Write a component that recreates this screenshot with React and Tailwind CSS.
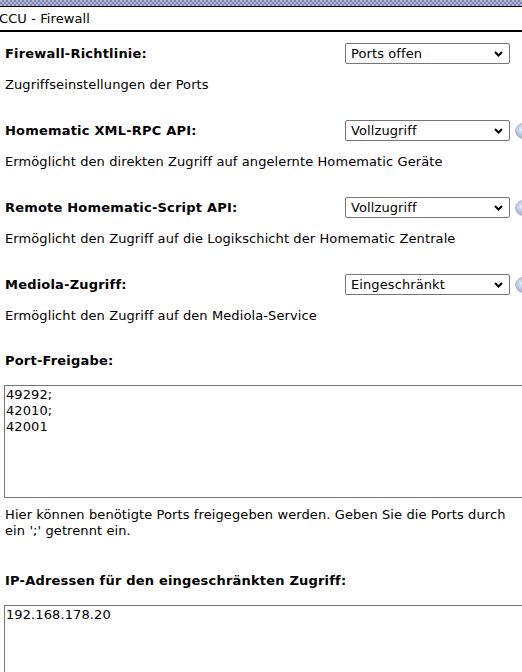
const SECTIONS = [
  {
    label: "Firewall-Richtlinie:",
    value: "Ports offen",
    desc: "Zugriffseinstellungen der Ports",
    help: false,
  },
  {
    label: "Homematic XML-RPC API:",
    value: "Vollzugriff",
    desc: "Ermöglicht den direkten Zugriff auf angelernte Homematic Geräte",
    help: true,
  },
  {
    label: "Remote Homematic-Script API:",
    value: "Vollzugriff",
    desc: "Ermöglicht den Zugriff auf die Logikschicht der Homematic Zentrale",
    help: true,
  },
  {
    label: "Mediola-Zugriff:",
    value: "Eingeschränkt",
    desc: "Ermöglicht den Zugriff auf den Mediola-Service",
    help: true,
  },
];

function Select({ value }) {
  return (
    <div className="relative w-[165px] h-[21px] shrink-0">
      <select
        defaultValue={value}
        className="appearance-none w-full h-full border border-[#767676] rounded-[2px] bg-white pl-[5px] text-[13px] leading-[19px] text-black"
      >
        <option>{value}</option>
      </select>
      <svg
        className="absolute right-[7px] top-[8px] pointer-events-none"
        width="9"
        height="6"
        viewBox="0 0 9 6"
      >
        <path d="M1 1l3.5 3.5L8 1" fill="none" stroke="#000" strokeWidth="2" />
      </svg>
    </div>
  );
}

function HelpIcon() {
  return (
    <span className="ml-[5px] shrink-0 w-[16px] h-[16px] rounded-full border border-[#b8bcc4] bg-[radial-gradient(circle_at_40%_40%,#e8eefa,#7d93c6)]" />
  );
}

export default function App() {
  return (
    <div className="w-[522px] min-h-[672px] overflow-hidden bg-white text-black text-[13px] leading-[16px] tracking-[0.1px] font-['DejaVu_Sans',Verdana,sans-serif]">
      {/* Title bar */}
      <div className="h-[6px] bg-[repeating-conic-gradient(#7b84b2_0_25%,#b3b8d6_0_50%)] bg-[length:4px_4px]" />
      <div className="border-t border-black border-b-2 h-[26px] flex items-center -ml-[1px]">
        CCU - Firewall
      </div>

      <div className="pl-[5px] pt-[11px]">
        {SECTIONS.map((s, i) => (
          <div key={s.label} className={i === 0 ? "" : "mt-[27px]"}>
            <div className="flex items-center h-[21px]">
              <div className="w-[340px] shrink-0 font-bold tracking-[0.2px]">{s.label}</div>
              <Select value={s.value} />
              {s.help && <HelpIcon />}
            </div>
            <div className="mt-[13px]">{s.desc}</div>
          </div>
        ))}

        <div className="mt-[29px] font-bold tracking-[0.2px]">Port-Freigabe:</div>
        <textarea
          readOnly
          defaultValue={"49292;\n42010;\n42001"}
          className="block mt-[16px] -ml-[1px] w-[540px] h-[113px] border border-[#767676] px-[1px] pt-[1px] pb-0 text-[13px] leading-[16px] resize-none"
        />
        <div className="mt-[9px] pr-[6px]">
          Hier können benötigte Ports freigegeben werden. Geben Sie die Ports durch
          ein ';' getrennt ein.
        </div>

        <div className="mt-[34px] font-bold tracking-[0.2px]">
          IP-Adressen für den eingeschränkten Zugriff:
        </div>
        <textarea
          readOnly
          defaultValue={"192.168.178.20"}
          className="block mt-[16px] -ml-[1px] w-[540px] h-[113px] border border-[#767676] px-[1px] pt-[1px] pb-0 text-[13px] leading-[16px] resize-none"
        />
      </div>
    </div>
  );
}
